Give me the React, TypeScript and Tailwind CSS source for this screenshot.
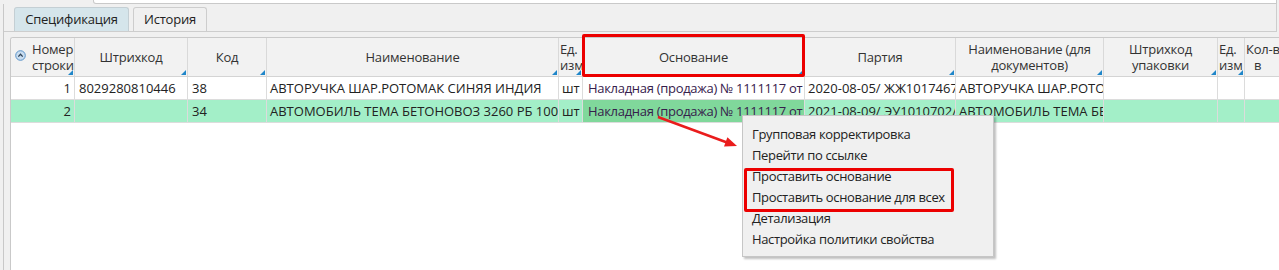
import React from "react";

type Col = { w: string; head: React.ReactNode; align?: "left" | "center"; tri?: boolean };

const FONT = { fontFamily: '"Open Sans", "Noto Sans", sans-serif' };

const Tri = () => (
  <svg width="5" height="5" viewBox="0 0 5 5" className="absolute right-[1px] bottom-[1px]">
    <polygon points="5,0 5,5 0,5" fill="#1f86c9" />
  </svg>
);

const COLS: Col[] = [
  { w: "w-[64px]", head: null },
  { w: "w-[113px]", head: "Штрихкод" },
  { w: "w-[79px]", head: "Код" },
  { w: "w-[292px]", head: "Наименование" },
  { w: "w-[24px]", head: <>Ед.<br />изм</>, align: "left" },
  { w: "w-[222px]", head: "Основание" },
  { w: "w-[151px]", head: "Партия" },
  { w: "w-[148px]", head: <>Наименование (для<br />документов)</> },
  { w: "w-[114px]", head: <>Штрихкод<br />упаковки</> },
  { w: "w-[27px]", head: <>Ед.<br />изм</>, align: "left" },
  { w: "w-[60px]", head: <>Кол-в<br /><span className="pl-[8px]">в</span></>, align: "left" },
];

const ROWS = [
  {
    num: "1",
    cells: ["8029280810446", "38", "АВТОРУЧКА ШАР.РОТОМАК СИНЯЯ ИНДИЯ", "шт", "Накладная (продажа) № 1111117 от 2020-08-05", "2020-08-05/ ЖЖ1017467/1", "АВТОРУЧКА ШАР.РОТОМАК СИНЯЯ ИНДИЯ", "", "", ""],
    sel: false,
  },
  {
    num: "2",
    cells: ["", "34", "АВТОМОБИЛЬ ТЕМА БЕТОНОВОЗ 3260 РБ 1000", "шт", "Накладная (продажа) № 1111117 от 2021-08-09", "2021-08-09/ ЭУ1010702/1", "АВТОМОБИЛЬ ТЕМА БЕТОНОВОЗ 3260", "", "", ""],
    sel: true,
  },
];

const MENU = [
  "Групповая корректировка",
  "Перейти по ссылке",
  "Проставить основание",
  "Проставить основание для всех",
  "Детализация",
  "Настройка политики свойства",
];

export default function App() {
  return (
    <div className="relative w-[1279px] h-[270px] overflow-hidden bg-[#f0f0f0] text-[#222]" style={FONT}>
      {/* top strip */}
      <div className="flex h-[4px]">
        <div className="w-[93px]" />
        <div className="flex-1 mr-[2px] bg-white border-b border-l border-r border-[#c9c9c9] rounded-bl-[3px]" />
      </div>

      <div className="ml-[3px] h-[266px] border-l border-[#c8c8c8] flex flex-col">
        {/* tabs */}
        <div className="flex items-end h-[28px] pl-[10px] gap-[4px] border-b border-[#cdcdcd] mr-[2px] border-r">
          <div className="h-[24px] w-[115px] flex items-center justify-center text-[13px] tracking-[-0.2px] bg-[#d5e5eb] border border-b-0 border-[#c4cfd4] rounded-t-[3px]">
            Спецификация
          </div>
          <div className="h-[24px] w-[74px] flex items-center justify-center text-[13px] tracking-[-0.2px] bg-[#f0f0f0] border border-b-0 border-[#cdcdcd] rounded-t-[3px]">
            История
          </div>
        </div>

        {/* grid */}
        <div className="mt-[5px] ml-[6px] flex-1 bg-white border-l border-t border-[#c9c9c9] rounded-tl-[3px] overflow-hidden">
          <div className="flex h-[39px] bg-[#f2f2f2] border-b border-[#d4d4d4] text-[13px] leading-[16px] tracking-[-0.2px] text-[#333]">
            {COLS.map((c, i) => (
              <div
                key={i}
                className={`relative shrink-0 ${c.w} border-r border-[#d9d9d9] flex items-center overflow-hidden whitespace-nowrap ${
                  c.align === "left" ? "justify-start pl-[1px]" : "justify-center text-center"
                }`}
              >
                {i === 0 ? (
                  <div className="flex items-start w-full pl-[4px]">
                    <svg width="11" height="11" viewBox="0 0 11 11" className="mt-[9px] shrink-0">
                      <circle cx="5.5" cy="5.5" r="4.8" fill="#c8dcef" stroke="#5b93c9" strokeWidth="1" />
                      <path d="M3.3 6.6 L5.5 4.3 L7.7 6.6" fill="none" stroke="#30455a" strokeWidth="1.3" />
                    </svg>
                    <span className="ml-[6px] text-left">Номер<br />строки</span>
                  </div>
                ) : (
                  <span>{c.head}</span>
                )}
                <Tri />
              </div>
            ))}
          </div>

          {ROWS.map((r, ri) => (
            <div
              key={ri}
              className={`flex h-[23px] border-b border-[#dcdcdc] text-[13px] leading-[22px] ${r.sel ? "bg-[#a3efc8]" : "bg-white"}`}
            >
              <div className={`${COLS[0].w} shrink-0 border-r border-[#dcdcdc] text-right pr-[3px]`}>{r.num}</div>
              {r.cells.map((t, ci) => {
                const col = COLS[ci + 1];
                const base =
                  ci === 4
                    ? "pl-[5px] text-[#36204c] tracking-[-0.3px]"
                    : ci === 0 || ci === 1
                    ? "pl-[4px]"
                    : "pl-[3px]";
                const focus = r.sel && ci === 4 ? "bg-[#80d89b]" : "";
                return (
                  <div
                    key={ci}
                    className={`${col.w} shrink-0 border-r border-[#dcdcdc] overflow-hidden whitespace-nowrap ${base} ${focus}`}
                  >
                    {t}
                  </div>
                );
              })}
            </div>
          ))}
        </div>
      </div>

      {/* highlight around the "Основание" header */}
      <div className="absolute left-[582px] top-[34px] w-[223px] h-[43px] border-[3px] border-[#ec0000] rounded-[2px]" />

      {/* arrow to context menu */}
      <svg className="absolute left-0 top-0 pointer-events-none" width="1279" height="270">
        <line x1="658" y1="117" x2="727" y2="142.5" stroke="#ea1c1c" strokeWidth="2.5" />
        <polygon points="737,146 724,146.6 727.4,137.2" fill="#ea1c1c" />
      </svg>

      {/* context menu */}
      <div className="absolute left-[742px] top-[115px] w-[252px] h-[142px] bg-[#f0f0f0] border border-[#c6c6c6] shadow-[2px_2px_2px_rgba(0,0,0,0.25)] pt-[8px] text-[13px] tracking-[-0.35px]">
        {MENU.map((m) => (
          <div key={m} className="h-[21px] leading-[21px] pl-[9px] whitespace-nowrap">
            {m}
          </div>
        ))}
        <div className="absolute left-[1px] top-[52px] w-[210px] h-[44px] border-[3px] border-[#ec0000] rounded-[2px]" />
      </div>
    </div>
  );
}
